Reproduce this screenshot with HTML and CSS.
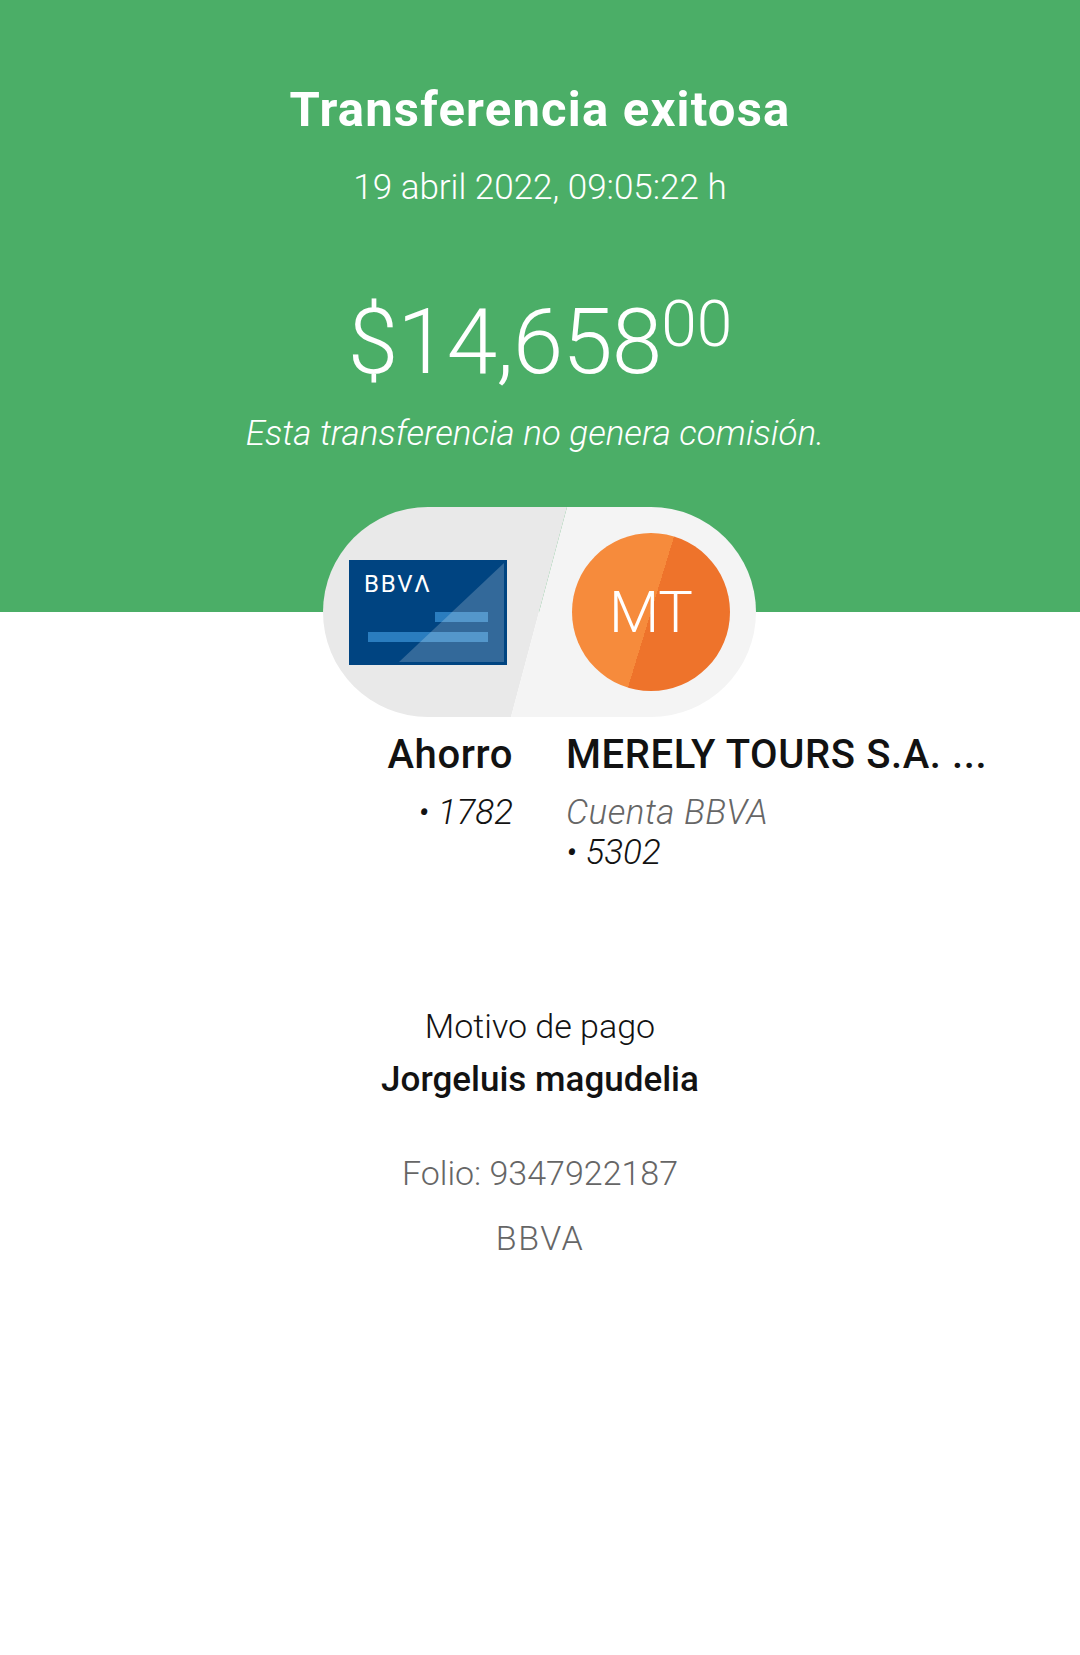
FILE: index.html
```html
<!DOCTYPE html>
<html lang="es">
<head>
    <meta charset="UTF-8">
    <meta name="viewport" content="width=device-width, initial-scale=1.0">
    <title>Transferencia exitosa</title>
    <link rel="stylesheet" href="styles.css">
</head>
<body>
    <header class="summary">
        <h1 class="title">Transferencia exitosa</h1>
        <p class="date">19 abril 2022, 09:05:22 h</p>
        <p class="amount">$14,658<sup class="cents">00</sup></p>
        <p class="fee-note">Esta transferencia no genera comisión.</p>
    </header>

    <div class="pill">
        <div class="pill-half pill-left">
            <svg class="card" width="158" height="105" viewBox="0 0 158 105">
                <rect width="158" height="105" fill="#004481"/>
                <rect x="86" y="52" width="53" height="10" fill="#2a7dbf"/>
                <rect x="19" y="72" width="120" height="10" fill="#2a7dbf"/>
                <path d="M50 102 L155 3 L155 102 Z" fill="#ffffff" fill-opacity="0.2"/>
                <text class="card-logo" x="15" y="32">BBVΛ</text>
            </svg>
        </div>
        <div class="pill-half pill-right">
            <div class="avatar">
                <span class="avatar-text">MT</span>
            </div>
        </div>
    </div>

    <section class="accounts">
        <div class="account account-from">
            <div class="account-name">Ahorro</div>
            <div class="account-number">• 1782</div>
        </div>
        <div class="account">
            <div class="account-name">MERELY TOURS S.A. ...</div>
            <div class="account-bank">Cuenta BBVA</div>
            <div class="account-number">• 5302</div>
        </div>
    </section>

    <section class="details">
        <p class="reason-label">Motivo de pago</p>
        <p class="reason">Jorgeluis magudelia</p>
        <p class="folio">Folio: 9347922187</p>
        <p class="bank">BBVA</p>
    </section>
</body>
</html>
```

FILE: styles.css
```css
* {
    box-sizing: border-box;
}
body {
    margin: 0;
    font-family: 'Roboto', sans-serif;
    font-weight: 300;
    color: #121212;
    background-color: #ffffff;
}
p, h1 {
    margin: 0;
}
.summary {
    height: 612px;
    padding-top: 82px;
    background-color: #4bae67;
    color: #ffffff;
    text-align: center;
}
.title {
    font-size: 49px;
    line-height: 56px;
    font-weight: 700;
    letter-spacing: 1.2px;
}
.date {
    margin-top: 28px;
    font-size: 35px;
    line-height: 44px;
}
.amount {
    margin-top: 82px;
    font-size: 91px;
    line-height: 100px;
    letter-spacing: -1px;
}
.cents {
    font-size: 64px;
    line-height: 0;
    vertical-align: 27px;
    letter-spacing: 0;
}
.fee-note {
    margin-top: 20px;
    padding-right: 10px;
    font-size: 35px;
    line-height: 44px;
    font-style: italic;
}
.pill {
    position: relative;
    width: 433px;
    height: 210px;
    margin: -105px 0 0 323px;
    border-radius: 105px;
    background: linear-gradient(#4bae67 50%, #ffffff 50%);
    overflow: hidden;
}
.pill-half {
    position: absolute;
    top: 0;
    bottom: 0;
    left: 0;
    right: 0;
    display: flex;
    align-items: center;
}
.pill-left {
    padding-left: 26px;
    background-color: #e9e9e9;
    clip-path: polygon(0 0, 244px 0, 188px 100%, 0 100%);
}
.pill-right {
    justify-content: flex-end;
    padding-right: 26px;
    background-color: #f4f4f4;
    clip-path: polygon(244px 0, 100% 0, 100% 100%, 188px 100%);
}
.card {
    display: block;
}
.card-logo {
    font-family: 'Roboto', sans-serif;
    font-size: 24px;
    font-weight: 400;
    letter-spacing: 1.8px;
    fill: #ffffff;
}
.avatar {
    width: 158px;
    height: 158px;
    border-radius: 50%;
    display: flex;
    align-items: center;
    justify-content: center;
    background: linear-gradient(107deg, #f68b3c 50%, #ee732b 50%);
}
.avatar-text {
    font-size: 58px;
    color: #ffffff;
}
.accounts {
    display: grid;
    grid-template-columns: 513px 1fr;
    column-gap: 53px;
    margin-top: 15px;
}
.account-from {
    text-align: right;
}
.account-name {
    font-size: 40px;
    line-height: 46px;
    font-weight: 500;
    letter-spacing: 0.6px;
}
.account-bank {
    margin-top: 15px;
    font-size: 35px;
    line-height: 40px;
    font-style: italic;
    letter-spacing: 0.5px;
    color: #666666;
}
.account-number {
    font-size: 35px;
    line-height: 40px;
    font-style: italic;
}
.account-from .account-number {
    margin-top: 15px;
}
.details {
    margin-top: 131px;
    text-align: center;
}
.reason-label {
    font-size: 34px;
    line-height: 44px;
}
.reason {
    margin-top: 10px;
    font-size: 35px;
    line-height: 44px;
    font-weight: 500;
}
.folio {
    margin-top: 49px;
    font-size: 34px;
    line-height: 44px;
    color: #666666;
}
.bank {
    margin-top: 21px;
    font-size: 34px;
    line-height: 44px;
    letter-spacing: 1.5px;
    color: #666666;
}
```
